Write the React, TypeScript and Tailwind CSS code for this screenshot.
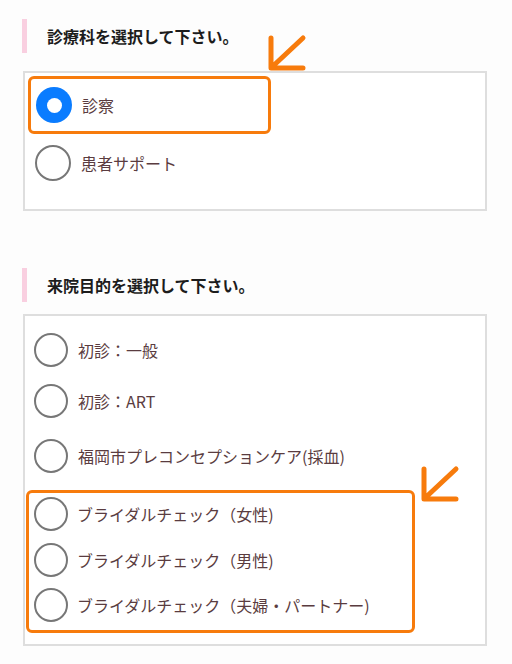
import React from "react";

const font = { fontFamily: '"Noto Sans CJK JP", "Noto Sans", sans-serif' };

function Radio({ size, checked }: { size: "lg" | "md"; checked?: boolean }) {
  if (checked) {
    return (
      <span className="flex h-[36px] w-[36px] shrink-0 items-center justify-center rounded-full bg-[#0a7cff]">
        <span className="h-[15px] w-[15px] rounded-full bg-white" />
      </span>
    );
  }
  return (
    <span
      className={
        size === "lg"
          ? "block h-[36px] w-[36px] shrink-0 rounded-full border-2 border-[#777777] bg-white"
          : "block h-[34px] w-[34px] shrink-0 rounded-full border-2 border-[#777777] bg-white"
      }
    />
  );
}

function Arrow({ className }: { className: string }) {
  return (
    <svg className={className} width="42" height="40" viewBox="0 0 42 40" fill="none">
      <path
        d="M5 5 L5 35 L37 35 M37 5 L6 34"
        stroke="#f77b0c"
        strokeWidth="5"
        strokeLinecap="round"
        strokeLinejoin="round"
      />
    </svg>
  );
}

function Heading({ text }: { text: string }) {
  return (
    <div className="flex items-center">
      <div className="ml-[22px] h-[34px] w-[5px] bg-[#f9cfe0]" />
      <div className="ml-[20px] text-[16px] font-bold leading-none text-[#1c1c1c]">{text}</div>
    </div>
  );
}

export default function App() {
  return (
    <div className="relative h-[664px] w-[512px] overflow-hidden bg-[#fdfdfd]" style={font}>
      <div className="pt-[19px]">
        <Heading text="診療科を選択して下さい。" />
        <div className="ml-[23px] mt-[18px] h-[140px] w-[464px] border-2 border-[#dedede] bg-white">
          <div className="ml-[3px] mt-[3px] flex h-[58px] w-[243px] items-center rounded-[6px] border-[3px] border-[#f77b0c] pl-[5px]">
            <Radio size="lg" checked />
            <span className="ml-[10px] text-[16px] leading-none text-[#5a3c40]">診察</span>
          </div>
          <div className="ml-[10px] mt-[11px] flex items-center">
            <Radio size="lg" />
            <span className="ml-[10px] text-[16px] leading-none text-[#5a3c40]">患者サポート</span>
          </div>
        </div>

        <div className="mt-[57px]">
          <Heading text="来院目的を選択して下さい。" />
        </div>
        <div className="ml-[23px] mt-[12px] h-[332px] w-[464px] border-2 border-[#dedede] bg-white">
          <div className="ml-[9px] mt-[17px] flex items-center">
            <Radio size="md" />
            <span className="ml-[10px] text-[16px] leading-none text-[#5a3c40]">初診：一般</span>
          </div>
          <div className="ml-[9px] mt-[17px] flex items-center">
            <Radio size="md" />
            <span className="ml-[10px] text-[16px] leading-none text-[#5a3c40]">初診：ART</span>
          </div>
          <div className="ml-[9px] mt-[21px] flex items-center">
            <Radio size="md" />
            <span className="ml-[10px] text-[16px] leading-none text-[#5a3c40]">福岡市プレコンセプションケア(採血)</span>
          </div>
          <div className="ml-[1px] mt-[17px] flex h-[143px] w-[389px] flex-col rounded-[6px] border-[3px] border-[#f77b0c] pl-[5px] pt-[4px]">
            <div className="flex items-center">
              <Radio size="md" />
              <span className="ml-[9px] text-[16px] leading-none text-[#5a3c40]">ブライダルチェック（女性)</span>
            </div>
            <div className="mt-[12px] flex items-center">
              <Radio size="md" />
              <span className="ml-[9px] text-[16px] leading-none text-[#5a3c40]">ブライダルチェック（男性)</span>
            </div>
            <div className="mt-[11px] flex items-center">
              <Radio size="md" />
              <span className="ml-[9px] text-[16px] leading-none text-[#5a3c40]">ブライダルチェック（夫婦・パートナー)</span>
            </div>
          </div>
        </div>
      </div>

      <Arrow className="absolute left-[266px] top-[33px]" />
      <Arrow className="absolute left-[419px] top-[464px]" />
    </div>
  );
}
